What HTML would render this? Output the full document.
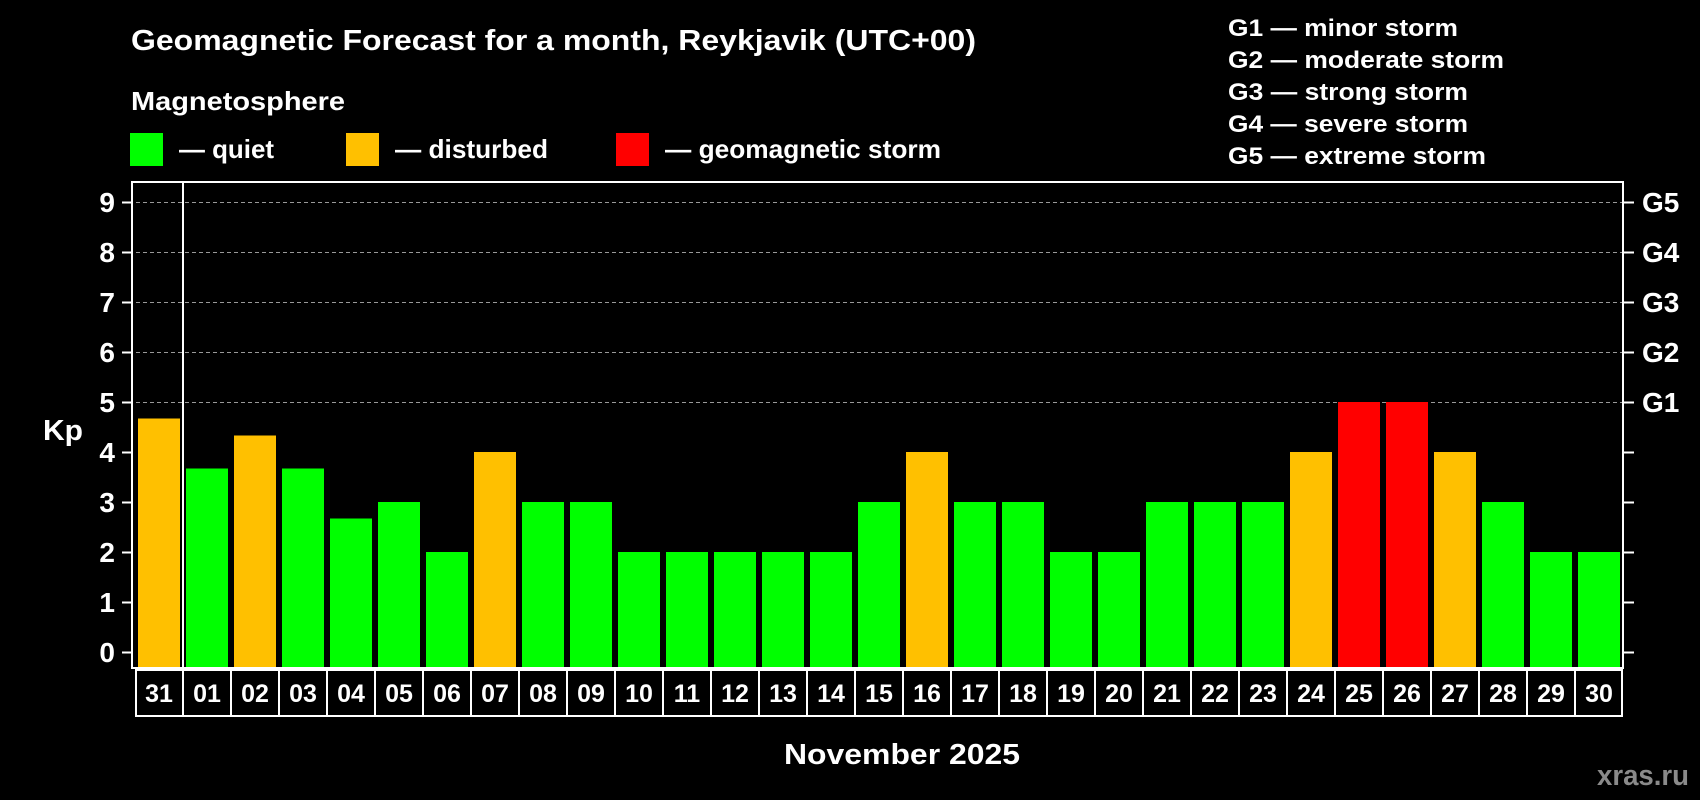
<!DOCTYPE html>
<html><head><meta charset="utf-8"><style>
html,body{margin:0;padding:0;background:#000;}
svg{display:block;font-family:"Liberation Sans",Arial,sans-serif;font-weight:bold;}
</style></head><body>
<svg width="1700" height="800" viewBox="0 0 1700 800" xmlns="http://www.w3.org/2000/svg">
<rect width="1700" height="800" fill="#000"/>
<g fill="#fff">
<text x="131" y="50" font-size="29" textLength="845" lengthAdjust="spacingAndGlyphs">Geomagnetic Forecast for a month, Reykjavik (UTC+00)</text>
<text x="131" y="110" font-size="26" textLength="214" lengthAdjust="spacingAndGlyphs">Magnetosphere</text>
<text x="179" y="158" font-size="26" textLength="95" lengthAdjust="spacingAndGlyphs">— quiet</text>
<text x="395" y="158" font-size="26" textLength="153" lengthAdjust="spacingAndGlyphs">— disturbed</text>
<text x="665" y="158" font-size="26" textLength="276" lengthAdjust="spacingAndGlyphs">— geomagnetic storm</text>
<g font-size="24">
<text x="1228" y="36" textLength="230" lengthAdjust="spacingAndGlyphs">G1 — minor storm</text>
<text x="1228" y="68" textLength="276" lengthAdjust="spacingAndGlyphs">G2 — moderate storm</text>
<text x="1228" y="100" textLength="240" lengthAdjust="spacingAndGlyphs">G3 — strong storm</text>
<text x="1228" y="132" textLength="240" lengthAdjust="spacingAndGlyphs">G4 — severe storm</text>
<text x="1228" y="164" textLength="258" lengthAdjust="spacingAndGlyphs">G5 — extreme storm</text>
</g>
<text x="784" y="764" font-size="29" textLength="236" lengthAdjust="spacingAndGlyphs">November 2025</text>
<text x="43" y="440" font-size="29" textLength="40" lengthAdjust="spacingAndGlyphs">Kp</text>
</g>
<text x="1597" y="785" font-size="29" fill="#8a8a8a" textLength="92" lengthAdjust="spacingAndGlyphs">xras.ru</text>
<rect x="130" y="133" width="33" height="33" fill="#00ff00"/>
<rect x="346" y="133" width="33" height="33" fill="#ffc000"/>
<rect x="616" y="133" width="33" height="33" fill="#ff0000"/>

<g stroke="#999" stroke-width="1" stroke-dasharray="4,3">
<line x1="136" x2="1622" y1="202.5" y2="202.5"/>
<line x1="136" x2="1622" y1="252.5" y2="252.5"/>
<line x1="136" x2="1622" y1="302.5" y2="302.5"/>
<line x1="136" x2="1622" y1="352.5" y2="352.5"/>
<line x1="136" x2="1622" y1="402.5" y2="402.5"/>
</g>
<g stroke="#fff" stroke-width="2">
<path d="M122 202.5H131M122 252.5H131M122 302.5H131M122 352.5H131M122 402.5H131M122 452.5H131M122 502.5H131M122 552.5H131M122 602.5H131M122 652.5H131"/>
<path d="M1624 202.5H1634M1624 252.5H1634M1624 302.5H1634M1624 352.5H1634M1624 402.5H1634M1624 452.5H1634M1624 502.5H1634M1624 552.5H1634M1624 602.5H1634M1624 652.5H1634"/>
</g>
<g fill="#fff" font-size="28" text-anchor="end">
<text x="115" y="212">9</text><text x="115" y="262">8</text><text x="115" y="312">7</text><text x="115" y="362">6</text><text x="115" y="412">5</text><text x="115" y="462">4</text><text x="115" y="512">3</text><text x="115" y="562">2</text><text x="115" y="612">1</text><text x="115" y="662">0</text>
</g>
<g fill="#fff" font-size="28">
<text x="1642" y="212">G5</text><text x="1642" y="262">G4</text><text x="1642" y="312">G3</text><text x="1642" y="362">G2</text><text x="1642" y="412">G1</text>
</g>

<g>
<rect x="138" y="418.5" width="42" height="248.5" fill="#ffc000"/>
<rect x="186" y="468.5" width="42" height="198.5" fill="#00ff00"/>
<rect x="234" y="435.5" width="42" height="231.5" fill="#ffc000"/>
<rect x="282" y="468.5" width="42" height="198.5" fill="#00ff00"/>
<rect x="330" y="518.5" width="42" height="148.5" fill="#00ff00"/>
<rect x="378" y="502" width="42" height="165" fill="#00ff00"/>
<rect x="426" y="552" width="42" height="115" fill="#00ff00"/>
<rect x="474" y="452" width="42" height="215" fill="#ffc000"/>
<rect x="522" y="502" width="42" height="165" fill="#00ff00"/>
<rect x="570" y="502" width="42" height="165" fill="#00ff00"/>
<rect x="618" y="552" width="42" height="115" fill="#00ff00"/>
<rect x="666" y="552" width="42" height="115" fill="#00ff00"/>
<rect x="714" y="552" width="42" height="115" fill="#00ff00"/>
<rect x="762" y="552" width="42" height="115" fill="#00ff00"/>
<rect x="810" y="552" width="42" height="115" fill="#00ff00"/>
<rect x="858" y="502" width="42" height="165" fill="#00ff00"/>
<rect x="906" y="452" width="42" height="215" fill="#ffc000"/>
<rect x="954" y="502" width="42" height="165" fill="#00ff00"/>
<rect x="1002" y="502" width="42" height="165" fill="#00ff00"/>
<rect x="1050" y="552" width="42" height="115" fill="#00ff00"/>
<rect x="1098" y="552" width="42" height="115" fill="#00ff00"/>
<rect x="1146" y="502" width="42" height="165" fill="#00ff00"/>
<rect x="1194" y="502" width="42" height="165" fill="#00ff00"/>
<rect x="1242" y="502" width="42" height="165" fill="#00ff00"/>
<rect x="1290" y="452" width="42" height="215" fill="#ffc000"/>
<rect x="1338" y="402" width="42" height="265" fill="#ff0000"/>
<rect x="1386" y="402" width="42" height="265" fill="#ff0000"/>
<rect x="1434" y="452" width="42" height="215" fill="#ffc000"/>
<rect x="1482" y="502" width="42" height="165" fill="#00ff00"/>
<rect x="1530" y="552" width="42" height="115" fill="#00ff00"/>
<rect x="1578" y="552" width="42" height="115" fill="#00ff00"/>
</g>
<rect x="132" y="182" width="1491" height="486" fill="none" stroke="#fff" stroke-width="2"/>
<line x1="183" y1="182" x2="183" y2="668" stroke="#fff" stroke-width="2"/>
<rect x="136" y="670" width="1486" height="46" fill="none" stroke="#fff" stroke-width="2"/>
<path stroke="#fff" stroke-width="2" d="M183 670V716M231 670V716M279 670V716M327 670V716M375 670V716M423 670V716M471 670V716M519 670V716M567 670V716M615 670V716M663 670V716M711 670V716M759 670V716M807 670V716M855 670V716M903 670V716M951 670V716M999 670V716M1047 670V716M1095 670V716M1143 670V716M1191 670V716M1239 670V716M1287 670V716M1335 670V716M1383 670V716M1431 670V716M1479 670V716M1527 670V716M1575 670V716"/>
<g fill="#fff" font-size="25" text-anchor="middle">
<text x="159" y="702">31</text><text x="207" y="702">01</text><text x="255" y="702">02</text><text x="303" y="702">03</text><text x="351" y="702">04</text><text x="399" y="702">05</text><text x="447" y="702">06</text><text x="495" y="702">07</text><text x="543" y="702">08</text><text x="591" y="702">09</text><text x="639" y="702">10</text><text x="687" y="702">11</text><text x="735" y="702">12</text><text x="783" y="702">13</text><text x="831" y="702">14</text><text x="879" y="702">15</text><text x="927" y="702">16</text><text x="975" y="702">17</text><text x="1023" y="702">18</text><text x="1071" y="702">19</text><text x="1119" y="702">20</text><text x="1167" y="702">21</text><text x="1215" y="702">22</text><text x="1263" y="702">23</text><text x="1311" y="702">24</text><text x="1359" y="702">25</text><text x="1407" y="702">26</text><text x="1455" y="702">27</text><text x="1503" y="702">28</text><text x="1551" y="702">29</text><text x="1599" y="702">30</text>
</g>
</svg>
</body></html>
